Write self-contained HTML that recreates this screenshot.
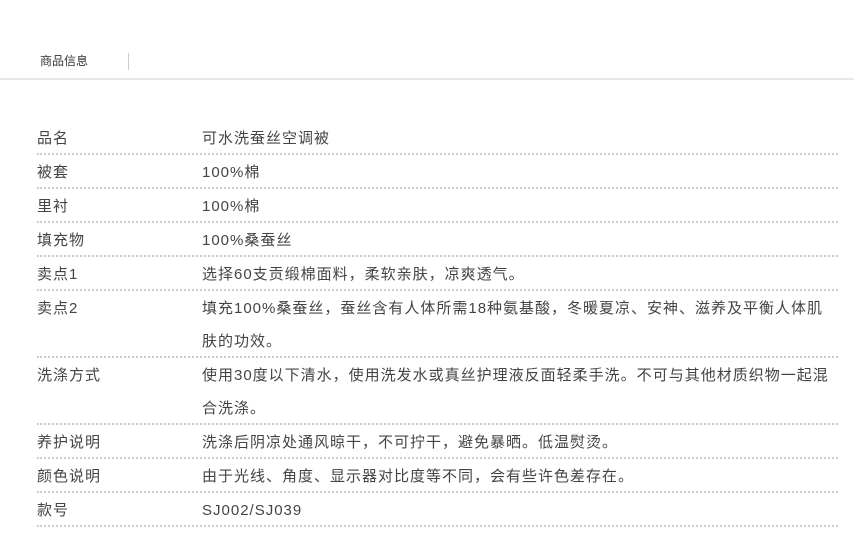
<!DOCTYPE html>
<html><head><meta charset="utf-8"><style>
body{margin:0;width:854px;height:539px;background:#fff;font-family:"Liberation Sans","Noto Sans CJK SC",sans-serif;overflow:hidden;position:relative}
.tab{position:absolute;left:40px;top:52px;font-size:12px;color:#333;line-height:18px}
.div{position:absolute;left:128px;top:53px;width:1px;height:17px;background:#ccc}
.hl{position:absolute;left:0;top:78px;width:854px;height:2px;background:#e8e8e8}
.t{position:absolute;left:37px;top:121px;width:801px}
.r{display:flex;border-bottom:2px dotted #ccc;font-size:15px;letter-spacing:1px;color:#444;line-height:32px}
.r.d{line-height:32.5px}
.l,.v{position:relative;top:2px}
.l{width:165px;flex:none}
.v{flex:1;white-space:nowrap}
</style></head><body>
<div class="tab">商品信息</div><div class="div"></div><div class="hl"></div>
<div class="t">
<div class="r"><div class="l">品名</div><div class="v">可水洗蚕丝空调被</div></div>
<div class="r"><div class="l">被套</div><div class="v">100%棉</div></div>
<div class="r"><div class="l">里衬</div><div class="v">100%棉</div></div>
<div class="r"><div class="l">填充物</div><div class="v">100%桑蚕丝</div></div>
<div class="r"><div class="l">卖点1</div><div class="v">选择60支贡缎棉面料，柔软亲肤，凉爽透气。</div></div>
<div class="r d"><div class="l">卖点2</div><div class="v">填充100%桑蚕丝，蚕丝含有人体所需18种氨基酸，冬暖夏凉、安神、滋养及平衡人体肌<br>肤的功效。</div></div>
<div class="r d"><div class="l">洗涤方式</div><div class="v">使用30度以下清水，使用洗发水或真丝护理液反面轻柔手洗。不可与其他材质织物一起混<br>合洗涤。</div></div>
<div class="r"><div class="l">养护说明</div><div class="v">洗涤后阴凉处通风晾干，不可拧干，避免暴晒。低温熨烫。</div></div>
<div class="r"><div class="l">颜色说明</div><div class="v">由于光线、角度、显示器对比度等不同，会有些许色差存在。</div></div>
<div class="r"><div class="l">款号</div><div class="v">SJ002/SJ039</div></div>
</div>
</body></html>
